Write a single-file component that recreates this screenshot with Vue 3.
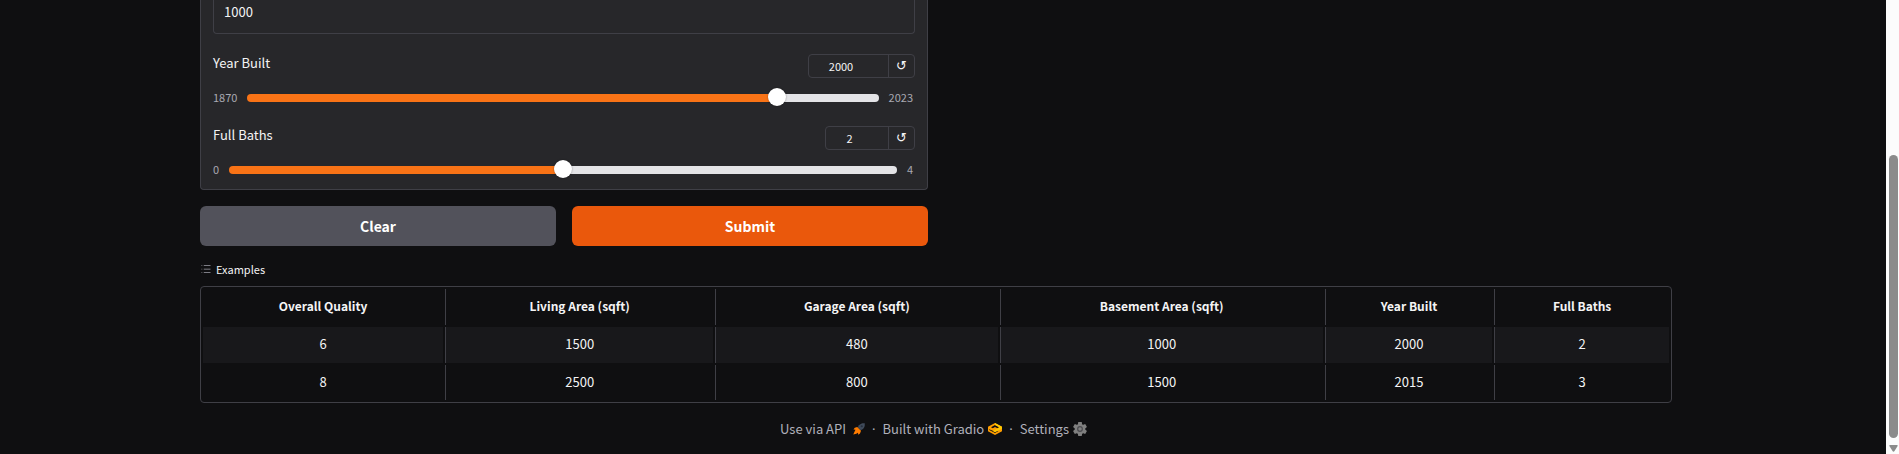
<script setup>
import { ref, reactive } from 'vue'

const basement = ref('1000')
const sliders = reactive([
  { id: 'year', label: 'Year Built', min: 1870, max: 2023, value: 2000, initial: 2000 },
  { id: 'baths', label: 'Full Baths', min: 0, max: 4, value: 2, initial: 2 }
])
const columns = [
  'Overall Quality',
  'Living Area (sqft)',
  'Garage Area (sqft)',
  'Basement Area (sqft)',
  'Year Built',
  'Full Baths'
]
const examples = [
  [6, 1500, 480, 1000, 2000, 2],
  [8, 2500, 800, 1500, 2015, 3]
]
const fill = (s) => ({ '--fill': ((s.value - s.min) / (s.max - s.min)) * 100 + '%' })
function clearAll() {
  basement.value = ''
  sliders.forEach((s) => (s.value = s.initial))
}
</script>

<template>
  <div class="shell">
    <div class="page">
      <main class="container">
        <div class="columns">
          <form class="form" @submit.prevent>
            <div class="panel">
              <input v-model="basement" class="textbox" type="text" aria-label="Basement Area (sqft)" />
              <div v-for="s in sliders" :key="s.id" class="block">
                <div class="head">
                  <label :for="s.id">{{ s.label }}</label>
                  <div class="tools">
                    <input
                      v-model.number="s.value"
                      :class="['number', s.id]"
                      type="number"
                      :min="s.min"
                      :max="s.max"
                      :aria-label="s.label + ' value'"
                    />
                    <button class="reset" type="button" aria-label="Reset" @click="s.value = s.initial">↺</button>
                  </div>
                </div>
                <div class="slide">
                  <span>{{ s.min }}</span>
                  <input :id="s.id" v-model.number="s.value" type="range" :min="s.min" :max="s.max" :style="fill(s)" />
                  <span>{{ s.max }}</span>
                </div>
              </div>
            </div>
            <div class="actions">
              <button class="btn clear" type="button" @click="clearAll">Clear</button>
              <button class="btn submit" type="submit">Submit</button>
            </div>
          </form>
        </div>

        <section class="examples">
          <h2 class="caption">
            <svg viewBox="0 0 32 32" width="12" height="12" aria-hidden="true">
              <path
                fill="currentColor"
                d="M10 6h18v2H10zm0 18h18v2H10zm0-9h18v2H10zm-6 0h2v2H4zm0-9h2v2H4zm0 18h2v2H4z"
              />
            </svg>
            Examples
          </h2>
          <div class="frame">
            <table>
              <colgroup>
                <col class="c1" /><col class="c2" /><col class="c3" /><col class="c4" /><col class="c5" /><col class="c6" />
              </colgroup>
              <thead>
                <tr>
                  <th v-for="c in columns" :key="c" scope="col">{{ c }}</th>
                </tr>
              </thead>
              <tbody>
                <tr v-for="row in examples" :key="row[0]">
                  <td v-for="(v, i) in row" :key="i">{{ v }}</td>
                </tr>
              </tbody>
            </table>
          </div>
        </section>
      </main>

      <footer class="footer">
        <a href="#api" class="api">
          Use via API
          <svg viewBox="0 0 24 24" width="12" height="12" aria-hidden="true">
            <path fill="#3f4a5a" d="M23.500.5C19 0 15 1.200 12 4.500L9.500 8.500l6 6L20 12C23 9 24 5 23.500.5z" />
            <circle cx="17.500" cy="6.500" r="2.200" fill="#27303d" />
            <path fill="#ff7c00" d="M8.500 8 3.500 9.500 1 13l4 .5-2 4L.5 23l6-1.500 3.500-2 .5 4 3.500-2.500L16 15.500z" />
          </svg>
        </a>
        <span class="dot">·</span>
        <a href="#gradio" class="built">
          Built with Gradio
          <svg viewBox="0 0 28 24" width="14" height="12" aria-hidden="true">
            <path
              fill="#ff9d00"
              fill-rule="evenodd"
              d="M14 0 28 7.500v9L14 24 0 16.500v-9zM14 4 6 8.500l3.500 2L14 8l5 2.500 3.500-2zM2.500 12.500v1.500L14 20l7-3.800-2-1.200-5 2.500z"
            />
            <path fill="#ffc800" d="M14 0 28 7.500v4L14 18.500l-4.500-2.500L18 11.500l4.500-3L14 4z" />
          </svg>
        </a>
        <span class="dot">·</span>
        <button type="button" class="settings">
          Settings
          <svg viewBox="0 0 24 24" width="14" height="14" aria-hidden="true">
            <g fill="#808080">
              <path d="M9 0h6l.7 4.500h-7.400zM9 24h6l.7-4.500h-7.400z" />
              <path d="M9 0h6l.7 4.500h-7.400zM9 24h6l.7-4.500h-7.400z" transform="rotate(60 12 12)" />
              <path d="M9 0h6l.7 4.500h-7.400zM9 24h6l.7-4.500h-7.400z" transform="rotate(120 12 12)" />
              <circle cx="12" cy="12" r="9" />
            </g>
            <circle cx="12" cy="12" r="4" fill="#808080" stroke="#4a4a4e" stroke-width="2" />
          </svg>
        </button>
      </footer>
    </div>
    <div class="scrollbar" aria-hidden="true">
      <div class="thumb"></div>
      <svg viewBox="0 0 9 7" width="9" height="7"><path fill="#8b8b8b" d="M1 0h7q1 0 .6 1L5.500 6q-1 1.500-2 0L.4 1Q0 0 1 0z" /></svg>
    </div>
  </div>
</template>

<style>
body {
  margin: 0;
  background: #0f0f11;
}
</style>

<style scoped>
* {
  box-sizing: border-box;
}
.shell {
  display: flex;
  min-height: 100vh;
  background: #0f0f11;
  color: #f4f4f5;
  font: 13px/20px 'Noto Sans CJK SC', 'Noto Sans', sans-serif;
}
button,
input {
  margin: 0;
  font: inherit;
  color: inherit;
}
.page {
  flex: 1;
  min-width: 0;
  padding-right: 14px;
}
.container {
  max-width: 1536px;
  margin: 0 auto;
  padding: 0 32px;
}
.columns {
  display: grid;
  grid-template-columns: 1fr 1fr;
  gap: 16px;
}
.panel {
  display: flex;
  flex-direction: column;
  padding: 0 12px 10px;
  border: 1px solid #3f3f46;
  border-top: 0;
  border-radius: 0 0 4px 4px;
  background: #27272a;
}
.textbox {
  width: 100%;
  height: 34px;
  margin-bottom: 20px;
  padding: 0 10px 10px;
  border: 1px solid #3f3f46;
  border-top: 0;
  border-radius: 0 0 4px 4px;
  background: transparent;
  outline: none;
}
.block {
  display: flex;
  flex-direction: column;
  gap: 11px;
}
.block + .block {
  margin-top: 19px;
}
.head {
  display: flex;
  justify-content: space-between;
  height: 24px;
  line-height: 18px;
}
.tools {
  display: flex;
  border: 1px solid #3f3f46;
  border-radius: 4px;
}
.number {
  padding: 0 15px 1px 0;
  border: 0;
  background: transparent;
  font-size: 11px;
  text-align: center;
  outline: none;
  appearance: textfield;
}
.number::-webkit-inner-spin-button {
  appearance: none;
  margin: 0;
}
.number.year {
  width: 79px;
}
.number.baths {
  width: 62px;
}
.reset {
  width: 26px;
  padding: 0;
  border: 0;
  border-left: 1px solid #3f3f46;
  background: transparent;
  font: 13px/20px 'DejaVu Sans', sans-serif;
}
.slide {
  display: flex;
  align-items: center;
  gap: 10px;
  height: 18px;
  padding-right: 2px;
  color: #a9a9b2;
  font-size: 11px;
  line-height: 16px;
}
.slide span {
  padding-bottom: 2px;
}
.slide input {
  flex: 1;
  min-width: 0;
  height: 18px;
  appearance: none;
  background: transparent;
}
.slide input::-webkit-slider-runnable-track {
  height: 8px;
  border-radius: 4px;
  background: linear-gradient(to right, #f97316 var(--fill), #e4e4e7 var(--fill));
}
.slide input::-webkit-slider-thumb {
  appearance: none;
  width: 18px;
  height: 18px;
  margin-top: -6px;
  border-radius: 50%;
  background: #fff;
  box-shadow: 0 0 2px rgba(0, 0, 0, 0.4);
}
.actions {
  display: grid;
  grid-template-columns: 1fr 1fr;
  gap: 16px;
  margin-top: 16px;
}
.btn {
  height: 40px;
  padding: 0;
  border: 0;
  border-radius: 6px;
  color: #fff;
  font-size: 14px;
  font-weight: 700;
}
.clear {
  background: #52525b;
}
.submit {
  background: #ea580c;
}
.examples {
  padding-top: 15px;
}
.caption {
  display: flex;
  align-items: center;
  gap: 4px;
  margin: 0 0 9px;
  font-size: 11px;
  font-weight: 400;
  line-height: 16px;
}
.caption svg {
  color: #a1a1aa;
}
.frame {
  border: 1px solid #3f3f46;
  border-radius: 4px;
}
table {
  width: 100%;
  table-layout: fixed;
  border-collapse: separate;
  border-spacing: 2px;
  text-align: center;
}
.c1 {
  width: 16.5%;
}
.c2 {
  width: 18.4%;
}
.c3 {
  width: 19.4%;
}
.c4 {
  width: 22.2%;
}
.c5 {
  width: 11.5%;
}
.c6 {
  width: 12%;
}
th,
td {
  height: 36px;
  padding: 0 0 2px;
}
tbody tr:last-child td {
  height: 35px;
}
th {
  font-size: 12px;
  font-weight: 700;
}
th + th,
td + td {
  border-left: 1px solid #3f3f46;
}
tbody tr:nth-child(odd) td {
  background: #18181b;
}
.footer {
  display: flex;
  justify-content: center;
  align-items: center;
  gap: 7px;
  margin-top: 16px;
  padding-right: 5px;
  color: #b0b0ba;
}
.footer a,
.settings {
  display: flex;
  align-items: center;
  gap: 4px;
  padding: 0;
  border: 0;
  background: none;
  color: inherit;
  text-decoration: none;
}
.footer .api {
  gap: 7px;
}
.dot {
  font-family: 'Noto Sans', sans-serif;
}
.scrollbar {
  display: flex;
  flex-direction: column;
  align-items: center;
  gap: 7px;
  width: 13px;
  padding: 155px 0 2px 2px;
  background: #fcfcfc;
}
.thumb {
  flex: 1;
  width: 9px;
  border-radius: 5px;
  background: #8b8b8b;
}
</style>
